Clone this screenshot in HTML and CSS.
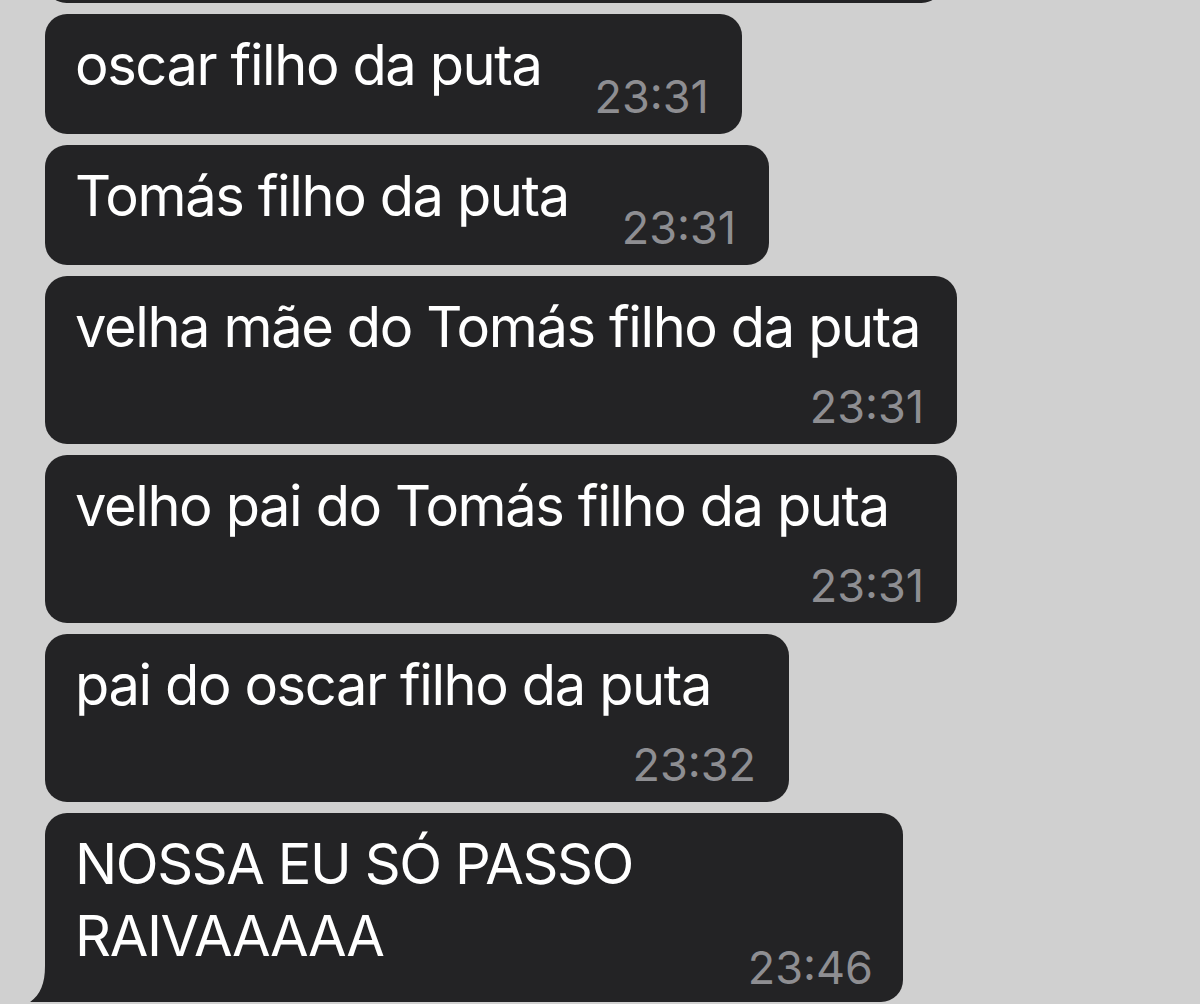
FILE: index.html
```html
<!doctype html>
<html lang="pt-br">
	<head>
		<meta charset="utf-8">
		<title>Conversa</title>
		<link rel="stylesheet" href="styles.css">
	</head>
	<body>
		<div class="chat">
			<div class="msg msg-cut"></div>
			<div class="msg">
				<span class="text">oscar filho da puta</span>
				<span class="time">23:31</span>
			</div>
			<div class="msg">
				<span class="text">Tomás filho da puta</span>
				<span class="time">23:31</span>
			</div>
			<div class="msg msg-stack msg-full">
				<span class="text">velha mãe do Tomás filho da puta</span>
				<span class="time">23:31</span>
			</div>
			<div class="msg msg-stack msg-full">
				<span class="text">velho pai do Tomás filho da puta</span>
				<span class="time">23:31</span>
			</div>
			<div class="msg msg-stack msg-mid">
				<span class="text">pai do oscar filho da puta</span>
				<span class="time">23:32</span>
			</div>
			<div class="msg msg-long msg-tail">
				<span class="text">NOSSA EU SÓ PASSO<br>RAIVAAAAA</span>
				<span class="time">23:46</span>
				<svg class="tail" width="40" height="40" viewBox="0 0 40 40">
					<path d="M22 0 C22 20 16 32 2 39 C12 40 22 37 30 34 L40 34 L40 0 Z" fill="#232325"/>
				</svg>
			</div>
		</div>
	</body>
</html>
```

FILE: styles.css
```css
html, body {
	margin: 0;
	background-color: #d0d0d0;
	font-family: Inter, "Noto Sans", sans-serif;
	color: #fff;
}
.chat {
	display: flex;
	flex-direction: column;
	align-items: flex-start;
	gap: 11px;
	padding-left: 45px;
	margin-top: -40px;
}
.msg {
	position: relative;
	display: flex;
	align-items: flex-end;
	gap: 53px;
	box-sizing: border-box;
	padding: 15px 33px 15px 30px;
	background-color: #232325;
	border-radius: 22px;
}
.msg-cut {
	width: 898px;
	height: 43px;
	padding: 0;
}
.text {
	font-size: 56px;
	line-height: 72px;
	letter-spacing: -1.4px;
	margin-bottom: 18px;
	white-space: nowrap;
}
.time {
	font-size: 45px;
	line-height: 45px;
	color: #8e8e92;
}
.msg-stack {
	flex-direction: column;
	align-items: flex-start;
	gap: 21px;
}
.msg-stack .text {
	margin-bottom: 0;
}
.msg-stack .time {
	align-self: flex-end;
}
.msg-full {
	width: 912px;
}
.msg-mid {
	width: 744px;
}
.msg-long {
	width: 858px;
	justify-content: space-between;
	padding-right: 30px;
	padding-bottom: 12px;
	border-bottom-left-radius: 0;
}
.msg-long .text {
	line-height: 72px;
}
.tail {
	position: absolute;
	left: -22px;
	bottom: -4px;
}
```
